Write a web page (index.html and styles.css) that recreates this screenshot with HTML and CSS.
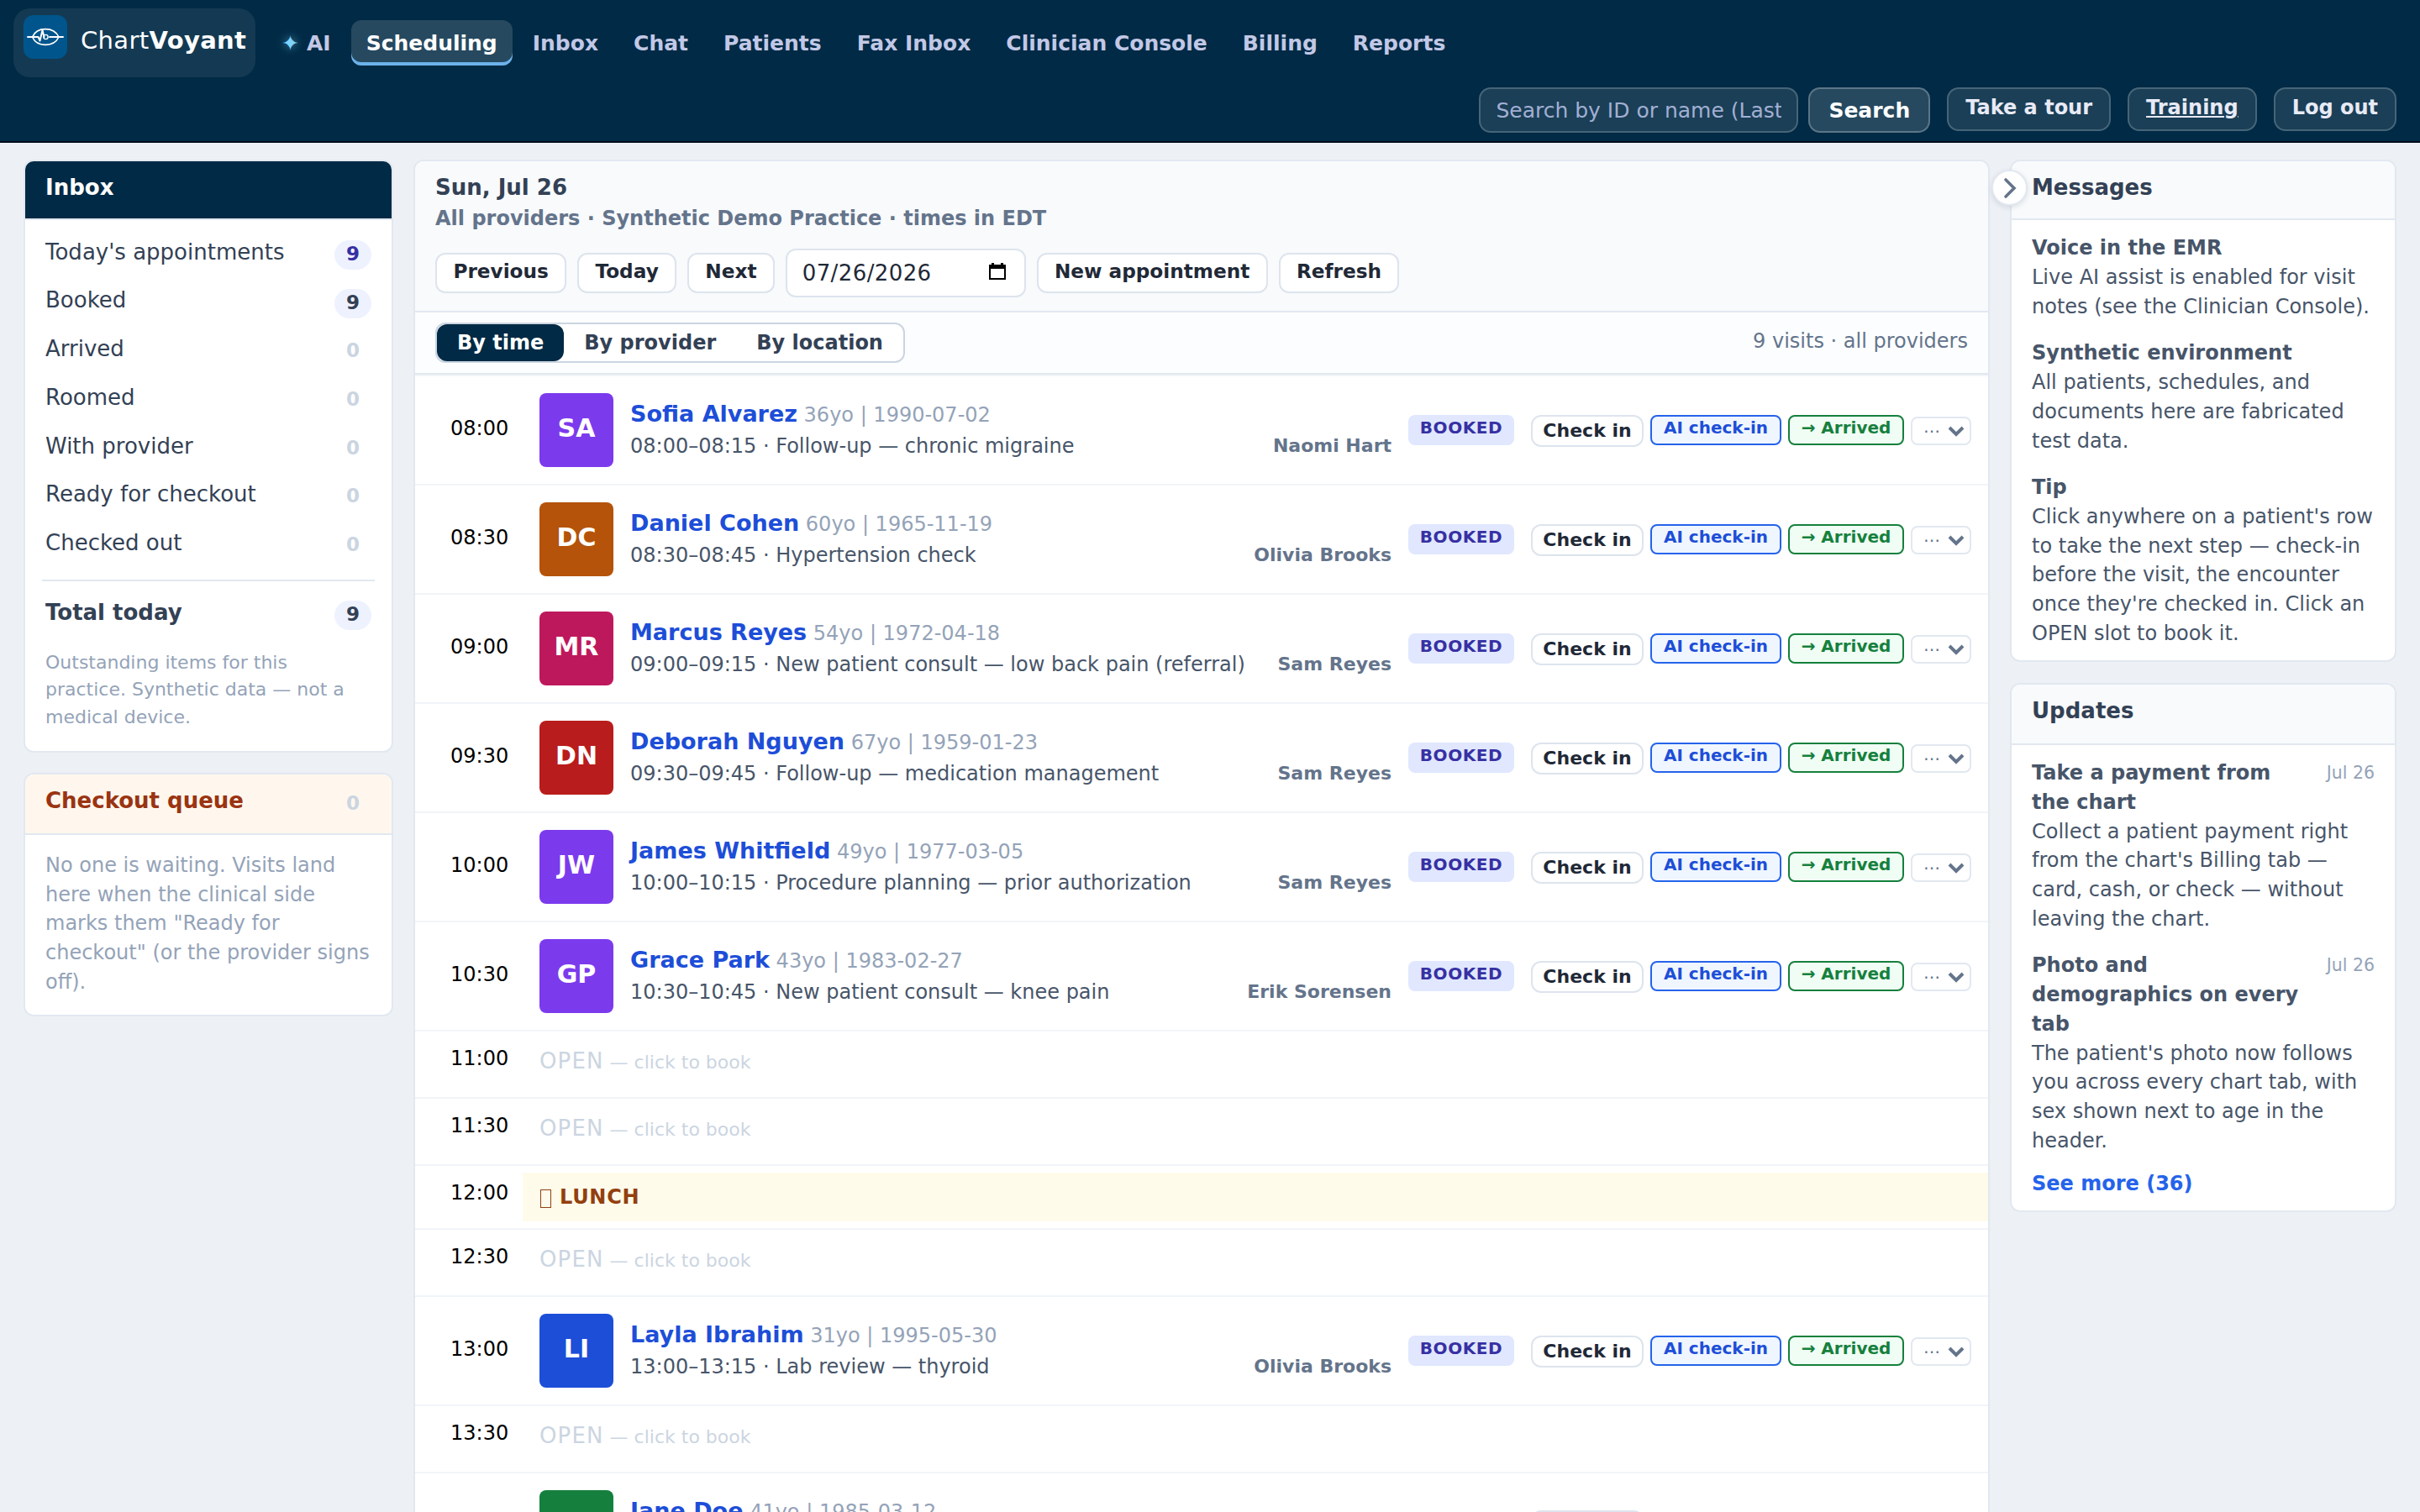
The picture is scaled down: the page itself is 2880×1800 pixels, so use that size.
FILE: index.html
```html
<!DOCTYPE html>
<html lang="en">
<head>
<meta charset="utf-8">
<title>ChartVoyant – Scheduling</title>
<link rel="stylesheet" href="styles.css">
</head>
<body>
<header class="topbar">
  <div class="topbar-main">
    <div class="brand">
      <svg class="brand-mark" viewBox="0 0 52 52" fill="none" stroke="#fff">
        <rect width="52" height="52" rx="12" fill="#00558c" stroke="none"/>
        <path d="M10.5 26C16 13.5 36 13.5 42 26C36 38.500 16 38.500 10.500 26Z" stroke-width="1.700"/>
        <path d="M5 26H17.500L19.500 30.500L22.500 18L24.500 26M31 26H47" stroke-width="2" stroke-linecap="round" stroke-linejoin="round"/>
        <circle cx="26.500" cy="26" r="2.600" stroke-width="1.400"/>
      </svg>
      <span class="brand-name">Chart<b>Voyant</b></span>
    </div>
    <nav class="nav">
      <a class="nav-item"><span class="spark">✦</span>AI</a>
      <a class="nav-item active">Scheduling</a>
      <a class="nav-item">Inbox</a>
      <a class="nav-item">Chat</a>
      <a class="nav-item">Patients</a>
      <a class="nav-item">Fax Inbox</a>
      <a class="nav-item">Clinician Console</a>
      <a class="nav-item">Billing</a>
      <a class="nav-item">Reports</a>
    </nav>
  </div>
  <div class="topbar-tools">
    <div class="search"><div class="search-input"><span>Search by ID or name (Last</span></div><button class="search-btn">Search</button></div>
    <a class="ghost">Take a tour</a>
    <a class="ghost underlined">Training</a>
    <a class="ghost">Log out</a>
  </div>
</header>

<main class="layout">
  <aside class="col">
    <section class="card">
      <h2 class="card-head dark">Inbox</h2>
      <div class="inbox">
        <div class="inbox-row"><span>Today's appointments</span><b class="count hot">9</b></div>
        <div class="inbox-row"><span>Booked</span><b class="count">9</b></div>
        <div class="inbox-row"><span>Arrived</span><b class="count zero">0</b></div>
        <div class="inbox-row"><span>Roomed</span><b class="count zero">0</b></div>
        <div class="inbox-row"><span>With provider</span><b class="count zero">0</b></div>
        <div class="inbox-row"><span>Ready for checkout</span><b class="count zero">0</b></div>
        <div class="inbox-row"><span>Checked out</span><b class="count zero">0</b></div>
        <div class="inbox-row total"><span>Total today</span><b class="count">9</b></div>
        <p class="inbox-note">Outstanding items for this practice. Synthetic data — not a medical device.</p>
      </div>
    </section>
    <section class="card">
      <h2 class="card-head warm"><span>Checkout queue</span><b class="count zero">0</b></h2>
      <p class="queue-note">No one is waiting. Visits land here when the clinical side marks them "Ready for checkout" (or the provider signs off).</p>
    </section>
  </aside>

  <section class="card schedule">
    <div class="sched-head">
      <h1 class="sched-title">Sun, Jul 26</h1>
      <p class="sched-sub">All providers · Synthetic Demo Practice · times in EDT</p>
      <div class="controls">
        <button class="btn">Previous</button>
        <button class="btn">Today</button>
        <button class="btn">Next</button>
        <div class="date-input"><span>07/26/2026</span>
          <svg width="20" height="20" viewBox="0 0 20 20"><path d="M3 0h3v2h8V0h3v2h3v18H0V2h3zM2 7v11h16V7z" fill="#000" fill-rule="evenodd"/></svg>
        </div>
        <button class="btn">New appointment</button>
        <button class="btn">Refresh</button>
      </div>
    </div>
    <div class="view-bar">
      <div class="segments"><span class="segment on">By time</span><span class="segment">By provider</span><span class="segment">By location</span></div>
      <span class="visit-count">9 visits · all providers</span>
    </div>

    <div class="row visit">
      <span class="time">08:00</span><span class="avatar violet">SA</span>
      <div class="who"><div><b class="name">Sofia Alvarez</b> <span class="meta">36yo | 1990-07-02</span></div><div class="reason">08:00–08:15 · Follow-up — chronic migraine</div></div>
      <span class="provider">Naomi Hart</span><span class="status">BOOKED</span>
      <div class="actions"><button class="act">Check in</button><button class="act blue">AI check-in</button><button class="act green">→ Arrived</button><span class="more"><span>…</span><svg viewBox="0 0 20 14"><path d="M2 3l8 8 8-8"/></svg></span></div>
    </div>
    <div class="row visit">
      <span class="time">08:30</span><span class="avatar amber">DC</span>
      <div class="who"><div><b class="name">Daniel Cohen</b> <span class="meta">60yo | 1965-11-19</span></div><div class="reason">08:30–08:45 · Hypertension check</div></div>
      <span class="provider">Olivia Brooks</span><span class="status">BOOKED</span>
      <div class="actions"><button class="act">Check in</button><button class="act blue">AI check-in</button><button class="act green">→ Arrived</button><span class="more"><span>…</span><svg viewBox="0 0 20 14"><path d="M2 3l8 8 8-8"/></svg></span></div>
    </div>
    <div class="row visit">
      <span class="time">09:00</span><span class="avatar pink">MR</span>
      <div class="who"><div><b class="name">Marcus Reyes</b> <span class="meta">54yo | 1972-04-18</span></div><div class="reason">09:00–09:15 · New patient consult — low back pain (referral)</div></div>
      <span class="provider">Sam Reyes</span><span class="status">BOOKED</span>
      <div class="actions"><button class="act">Check in</button><button class="act blue">AI check-in</button><button class="act green">→ Arrived</button><span class="more"><span>…</span><svg viewBox="0 0 20 14"><path d="M2 3l8 8 8-8"/></svg></span></div>
    </div>
    <div class="row visit">
      <span class="time">09:30</span><span class="avatar red">DN</span>
      <div class="who"><div><b class="name">Deborah Nguyen</b> <span class="meta">67yo | 1959-01-23</span></div><div class="reason">09:30–09:45 · Follow-up — medication management</div></div>
      <span class="provider">Sam Reyes</span><span class="status">BOOKED</span>
      <div class="actions"><button class="act">Check in</button><button class="act blue">AI check-in</button><button class="act green">→ Arrived</button><span class="more"><span>…</span><svg viewBox="0 0 20 14"><path d="M2 3l8 8 8-8"/></svg></span></div>
    </div>
    <div class="row visit">
      <span class="time">10:00</span><span class="avatar violet">JW</span>
      <div class="who"><div><b class="name">James Whitfield</b> <span class="meta">49yo | 1977-03-05</span></div><div class="reason">10:00–10:15 · Procedure planning — prior authorization</div></div>
      <span class="provider">Sam Reyes</span><span class="status">BOOKED</span>
      <div class="actions"><button class="act">Check in</button><button class="act blue">AI check-in</button><button class="act green">→ Arrived</button><span class="more"><span>…</span><svg viewBox="0 0 20 14"><path d="M2 3l8 8 8-8"/></svg></span></div>
    </div>
    <div class="row visit">
      <span class="time">10:30</span><span class="avatar violet">GP</span>
      <div class="who"><div><b class="name">Grace Park</b> <span class="meta">43yo | 1983-02-27</span></div><div class="reason">10:30–10:45 · New patient consult — knee pain</div></div>
      <span class="provider">Erik Sorensen</span><span class="status">BOOKED</span>
      <div class="actions"><button class="act">Check in</button><button class="act blue">AI check-in</button><button class="act green">→ Arrived</button><span class="more"><span>…</span><svg viewBox="0 0 20 14"><path d="M2 3l8 8 8-8"/></svg></span></div>
    </div>
    <div class="row open"><span class="time">11:00</span><span class="slot">OPEN<small> — click to book</small></span></div>
    <div class="row open"><span class="time">11:30</span><span class="slot">OPEN<small> — click to book</small></span></div>
    <div class="row lunch"><span class="time">12:00</span><span class="lunch-band"><i class="glyph-box"></i>LUNCH</span></div>
    <div class="row open"><span class="time">12:30</span><span class="slot">OPEN<small> — click to book</small></span></div>
    <div class="row visit">
      <span class="time">13:00</span><span class="avatar blue-bg">LI</span>
      <div class="who"><div><b class="name">Layla Ibrahim</b> <span class="meta">31yo | 1995-05-30</span></div><div class="reason">13:00–13:15 · Lab review — thyroid</div></div>
      <span class="provider">Olivia Brooks</span><span class="status">BOOKED</span>
      <div class="actions"><button class="act">Check in</button><button class="act blue">AI check-in</button><button class="act green">→ Arrived</button><span class="more"><span>…</span><svg viewBox="0 0 20 14"><path d="M2 3l8 8 8-8"/></svg></span></div>
    </div>
    <div class="row open"><span class="time">13:30</span><span class="slot">OPEN<small> — click to book</small></span></div>
    <div class="row visit">
      <span class="time"></span><span class="avatar green-bg"></span>
      <div class="who"><div><b class="name">Jane Doe</b> <span class="meta">41yo | 1985-03-12</span></div><div class="reason">&nbsp;</div></div>
      <div class="actions"><button class="act"></button><button class="act blue"></button><button class="act green"></button><span class="more"></span></div>
    </div>
  </section>

  <aside class="col side">
    <span class="collapse"><svg width="16" height="26" viewBox="0 0 16 26"><path d="M3 3l10 10L3 23"/></svg></span>
    <section class="card">
      <h2 class="card-head">Messages</h2>
      <div class="feed">
        <div class="item"><b>Voice in the EMR</b><p>Live AI assist is enabled for visit notes (see the Clinician Console).</p></div>
        <div class="item"><b>Synthetic environment</b><p>All patients, schedules, and documents here are fabricated test data.</p></div>
        <div class="item"><b>Tip</b><p>Click anywhere on a patient's row to take the next step — check-in before the visit, the encounter once they're checked in. Click an OPEN slot to book it.</p></div>
      </div>
    </section>
    <section class="card updates">
      <h2 class="card-head">Updates</h2>
      <div class="feed">
        <div class="item"><div class="item-head"><b>Take a payment from the chart</b><time>Jul 26</time></div><p>Collect a patient payment right from the chart's Billing tab — card, cash, or check — without leaving the chart.</p></div>
        <div class="item"><div class="item-head"><b>Photo and demographics on every tab</b><time>Jul 26</time></div><p>The patient's photo now follows you across every chart tab, with sex shown next to age in the header.</p></div>
        <a class="see-more">See more (36)</a>
      </div>
    </section>
  </aside>
</main>
</body>
</html>
```
FILE: styles.css
```css
* { box-sizing: border-box; }

body {
  margin: 0;
  height: 1800px;
  overflow: hidden;
  background: #edf1f6;
  color: #334155;
  font-family: "DejaVu Sans", sans-serif;
  font-size: 24px;
  line-height: 36px;
}

h1, h2, p { margin: 0; }
button { font-family: inherit; font-weight: 700; margin: 0; white-space: nowrap; }

/* Top bar */
.topbar {
  height: 170px;
  padding: 10px 28px 0 16px;
  background: #002a45;
  border-bottom: 2px solid #000b1c;
}
.topbar-main { display: flex; align-items: flex-start; height: 94px; }
.brand {
  display: flex;
  align-items: flex-start;
  gap: 16px;
  width: 288px;
  height: 82px;
  padding: 8px 0 0 12px;
  border-radius: 20px;
  background: rgba(255, 255, 255, .08);
}
.brand-mark { width: 52px; height: 52px; flex: none; }
.brand-name {
  padding-top: 8px;
  color: #fff;
  font-size: 29px;
  line-height: 44px;
  letter-spacing: .012em;
}
.nav { display: flex; gap: 6px; margin: 14px 0 0 14px; }
.nav-item {
  display: flex;
  height: 54px;
  padding: 0 18px;
  border-radius: 12px;
  color: #c2c8e6;
  font-size: 25px;
  font-weight: 700;
  line-height: 56px;
}
.nav-item.active {
  color: #fff;
  background: rgba(255, 255, 255, .15);
  box-shadow: inset 0 -4px 0 #6cb2eb;
}
.spark {
  width: 29px;
  margin-left: -1px;
  margin-right: 1px;
  color: #7dd3fc;
  font-size: 25px;
  font-weight: 400;
  text-shadow: 0 0 12px rgba(125, 211, 252, .7);
}
.topbar-tools { display: flex; justify-content: flex-end; align-items: flex-start; gap: 20px; }
.search { display: flex; gap: 12px; }
.search-input {
  width: 380px;
  height: 54px;
  padding: 0 18px;
  border: 2px solid rgba(255, 255, 255, .2);
  border-radius: 14px;
  background: rgba(255, 255, 255, .1);
  color: #a3afd3;
  font-size: 25px;
  line-height: 52px;
  white-space: nowrap;
}
.search-input span { display: block; height: 50px; overflow: hidden; }
.search-btn {
  height: 54px;
  padding: 1px 22px 0;
  border: 2px solid rgba(255, 255, 255, .25);
  border-radius: 14px;
  background: rgba(255, 255, 255, .15);
  color: #fff;
  font-size: 25px;
  line-height: 49px;
}
.ghost {
  height: 52px;
  padding: 0 20px;
  border: 2px solid rgba(255, 255, 255, .2);
  border-radius: 14px;
  background: rgba(255, 255, 255, .1);
  color: #e8eaf6;
  font-size: 24px;
  font-weight: 700;
  line-height: 44px;
}
.underlined { text-decoration: underline; }

/* Page columns */
.layout {
  display: grid;
  grid-template-columns: 440px 1876px 460px;
  gap: 24px;
  align-items: start;
  padding: 20px 28px;
}
.col { display: flex; flex-direction: column; gap: 24px; }
.card {
  overflow: hidden;
  border: 2px solid #e2e8f0;
  border-radius: 12px;
  background: #fff;
}
.card-head {
  display: flex;
  justify-content: space-between;
  height: 70px;
  padding: 12px 24px 0;
  border-bottom: 2px solid #e2e8f0;
  background: #f8fafc;
  color: #334155;
  font-size: 26px;
  line-height: 38px;
}
.card-head.dark { background: #002a45; color: #fff; }
.card-head.warm { height: 72px; background: #fff7ed; color: #9a3412; }
.updates .card-head { height: 72px; }

/* Inbox */
.inbox { padding: 8px 20px 24px; }
.inbox-row {
  display: flex;
  justify-content: space-between;
  height: 57.7px;
  padding: 10.8px 4px 0;
  font-size: 26px;
  line-height: 38px;
}
.count {
  width: 44px;
  height: 35px;
  margin-top: 5.2px;
  border-radius: 18px;
  background: #eef2ff;
  color: #334155;
  font-size: 23.04px;
  line-height: 32px;
  text-align: center;
}
.count.hot { color: #3730a3; }
.count.zero { background: none; color: #cbd5e1; }
.card-head .count { margin-top: 6px; line-height: 33px; }
.inbox-row.total {
  height: 68px;
  margin-top: 16.5px;
  padding-top: 18px;
  border-top: 2px solid #e2e8f0;
  font-weight: 700;
}
.inbox-row.total .count { margin-top: 5px; }
.inbox-note { padding: 14.6px 4px 0; color: #94a3b8; font-size: 22px; line-height: 32.4px; }
.queue-note { padding: 19px 24px 22px; color: #94a3b8; line-height: 34.6px; }

/* Schedule */
.sched-head { height: 180px; padding: 12px 24px 0; background: #f8fafc; border-bottom: 2px solid #e2e8f0; }
.sched-title { color: #334155; font-size: 26px; line-height: 38px; }
.sched-sub { color: #64748b; font-weight: 700; line-height: 36px; }
.controls { display: flex; align-items: center; gap: 12.8px; margin-top: 18px; height: 58px; }
.btn {
  height: 48px;
  padding: 0 19.4px 5px;
  border: 2px solid #dde4ed;
  border-radius: 12px;
  background: #fff;
  color: #1f2937;
  font-size: 23.2px;
  line-height: 39px;
}
.date-input {
  display: flex;
  align-items: center;
  justify-content: space-between;
  width: 286px;
  height: 58px;
  padding: 0 22px 0 18px;
  border: 2px solid #dde4ed;
  border-radius: 12px;
  background: #fff;
  color: #1f2937;
  font-size: 26px;
  letter-spacing: .4px;
}
.date-input svg { margin-top: -4px; }
.view-bar {
  display: flex;
  justify-content: space-between;
  height: 74px;
  padding: 12px 24px 0;
  background: #fcfdff;
  border-bottom: 2px solid #e2e8f0;
}
.segments { display: flex; height: 48px; border: 2px solid #cbd5e1; border-radius: 12px; background: #fff; }
.segment { padding: 0 24px; border-radius: 12px; color: #334155; font-weight: 700; line-height: 44px; }
.segment.on { background: #002a45; color: #fff; }
.visit-count { color: #64748b; line-height: 45px; }

.row { display: flex; border-top: 2px solid #f1f5f9; }
.time { flex: none; width: 128px; padding-left: 42px; color: #000; }
.visit { height: 130px; align-items: center; padding-right: 20px; }
.visit .time { padding-bottom: 4px; }
.avatar {
  flex: none;
  width: 88px;
  height: 88px;
  margin: 0 20px;
  border-radius: 8px;
  color: #fff;
  font-size: 30px;
  font-weight: 700;
  line-height: 84px;
  text-align: center;
}
.violet { background: #7c3aed; }
.amber { background: #b45309; }
.pink { background: #be185d; }
.red { background: #b91c1c; }
.blue-bg { background: #1d4ed8; }
.green-bg { background: #15803d; }
.who { flex: 1; white-space: nowrap; }
.name { color: #1d4ed8; font-size: 27px; }
.meta { color: #94a3b8; }
.reason { margin-top: 1px; color: #475569; }
.provider { margin: 37px 20px 0 0; color: #64748b; font-size: 22px; font-weight: 700; line-height: 34px; }
.status {
  width: 126px;
  height: 36px;
  border-radius: 8px;
  background: #e0e7ff;
  color: #3730a3;
  font-size: 20px;
  font-weight: 700;
  line-height: 31px;
  letter-spacing: .03em;
  text-align: center;
}
.actions { display: flex; align-items: center; gap: 8px; margin-left: 20px; }
.act {
  height: 36px;
  padding: 0 0 5px;
  border: 2px solid #dde4ed;
  border-radius: 8px;
  background: #fff;
  font-size: 20px;
  line-height: 27px;
}
.act:first-child { width: 134px; height: 38px; margin-top: 2px; padding: 0; border-radius: 12px; color: #1f2937; font-size: 22px; line-height: 34px; }
.act.blue { width: 156px; border-color: #2563eb; background: #eff6ff; color: #1d4ed8; }
.act.green { width: 138px; border-color: #15803d; background: #f0fdf4; color: #15803d; }
.visit:last-child .act:first-child { margin-top: -2px; }
.more {
  display: flex;
  align-items: center;
  justify-content: space-between;
  width: 72px;
  height: 34px;
  margin-top: 2px;
  padding: 0 6px 0 13px;
  border: 2px solid #e2e8f0;
  border-radius: 8px;
  color: #64748b;
  font-size: 20px;
  line-height: 24px;
}
.more span { padding-bottom: 10px; }
.more svg { width: 20px; height: 14px; fill: none; stroke: #64748b; stroke-width: 4; }

.open { height: 80px; padding-top: 14px; }
.slot { padding: 2px 0 0 20px; color: #cbd5e1; font-size: 26px; line-height: 38px; letter-spacing: 1.15px; }
.slot small { font-size: 22px; letter-spacing: 0; }
.lunch { height: 76px; padding-top: 8px; }
.lunch .time { padding-top: 6px; }
.lunch-band {
  display: flex;
  align-items: center;
  flex: 1;
  height: 58px;
  padding: 0 0 0 21px;
  background: #fffbeb;
  color: #92400e;
  font-weight: 700;
  line-height: 58px;
  letter-spacing: .03em;
}
.glyph-box { width: 13px; height: 22px; margin: 3px 10px 0 0; border: 1.5px solid #92400e; }

/* Right column */
.side { position: relative; gap: 25px; }
.collapse {
  position: absolute;
  left: -22px;
  top: 12px;
  display: flex;
  align-items: center;
  justify-content: center;
  width: 43px;
  height: 43px;
  border: 2px solid #e2e8f0;
  border-radius: 50%;
  background: #fff;
  box-shadow: 0 2px 6px rgba(15, 23, 42, .12);
}
.collapse svg { fill: none; stroke: #64748b; stroke-width: 3.6; stroke-linecap: round; }
.feed { padding: 16.2px 24px 14px; color: #475569; line-height: 34.8px; }
.item { margin-bottom: 20.6px; }
.item:last-child { margin-bottom: 0; }
.item b { display: block; }
.item-head { display: flex; justify-content: space-between; gap: 16px; }
.item time { flex: none; color: #94a3b8; font-size: 20.48px; }
.see-more { display: block; margin-top: -4px; color: #2563eb; font-weight: 700; }
```
